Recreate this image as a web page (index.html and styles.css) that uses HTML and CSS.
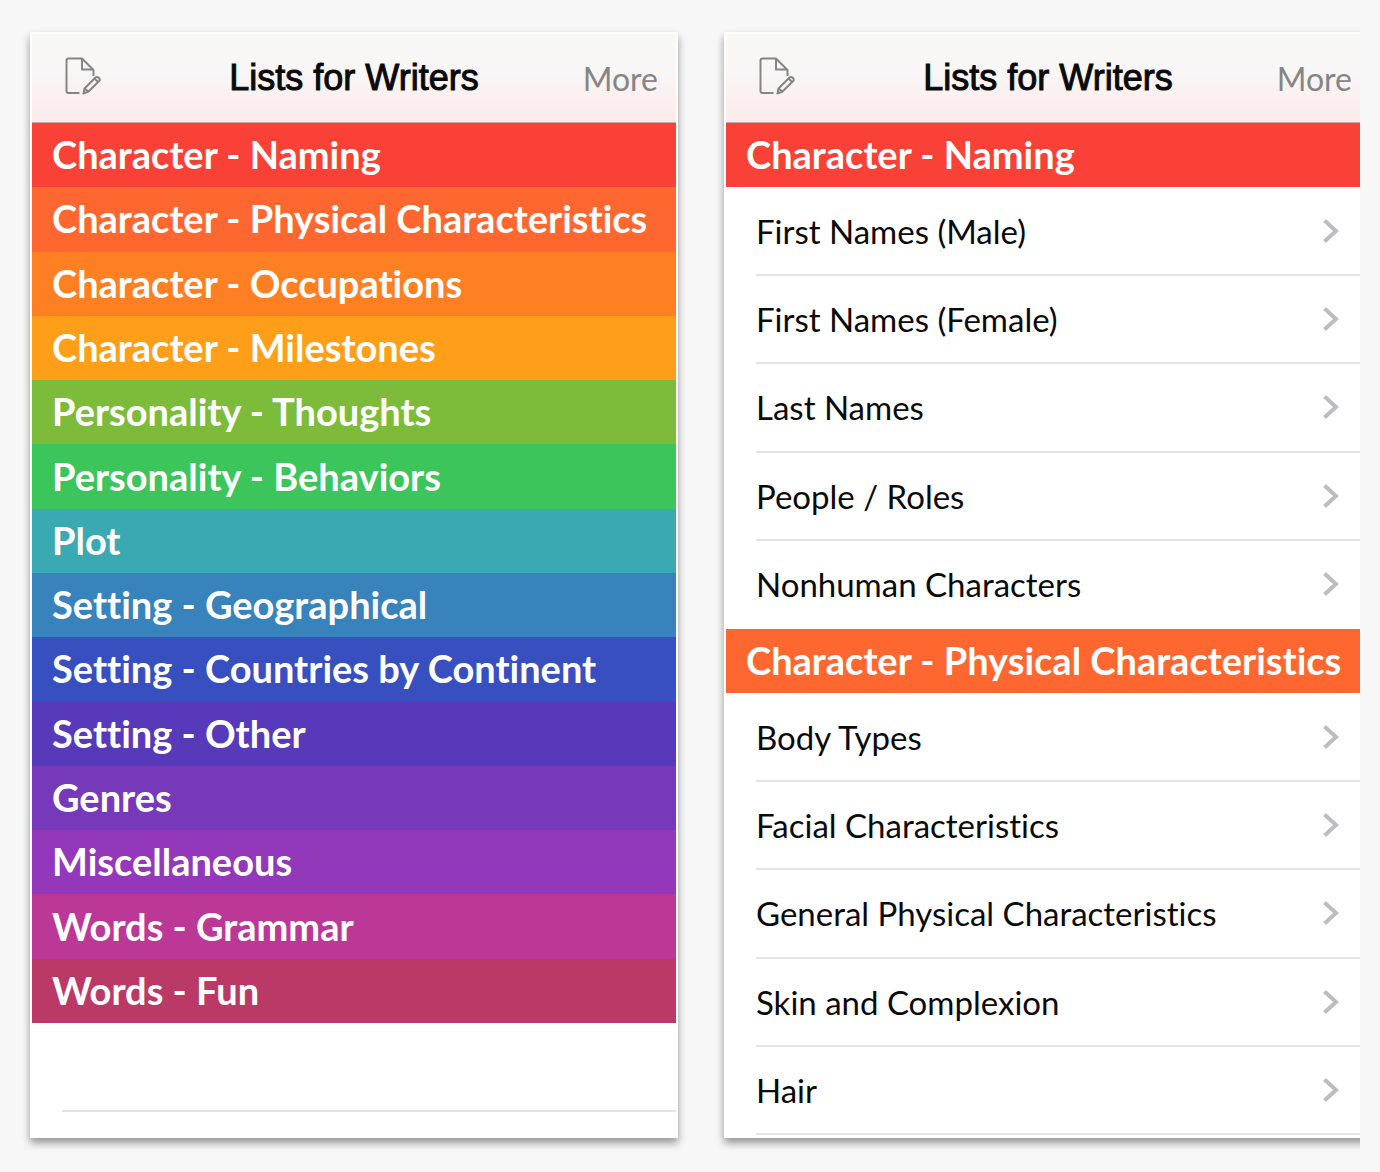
FILE: index.html
```html
<!DOCTYPE html>
<html lang="en">
<head>
<meta charset="utf-8">
<title>Lists for Writers</title>
<link rel="stylesheet" href="styles.css">
</head>
<body>
<svg class="sprite" aria-hidden="true">
  <symbol id="compose" viewBox="0 0 36 38">
    <path d="M14.500 36H3.500Q1.500 36 1.500 34V3.500Q1.500 1.500 3.500 1.500H17L28.500 13V19M17 1.500V12.500H28.500"/>
    <path d="M18.500 36.500L19.500 31.500L30.500 20.500Q32 19.200 33.800 20.800Q35.500 22.600 34.200 24L23.500 34.500ZM29.500 21.500L33.200 25M19.500 31.500L23.500 34.500"/>
  </symbol>
  <symbol id="chevron" viewBox="0 0 18 26"><path d="M2.500 2.500L14 13L2.500 23.500"/></symbol>
</svg>
<main class="strip">
  <section class="card">
    <header class="bar">
      <button class="compose" aria-label="New note"><svg class="icon"><use href="#compose"/></svg></button>
      <h1 class="title">Lists for Writers</h1>
      <button class="more">More</button>
    </header>
    <nav class="bands">
      <a class="band red" href="#">Character - Naming</a>
      <a class="band coral" href="#">Character - Physical Characteristics</a>
      <a class="band orange" href="#">Character - Occupations</a>
      <a class="band amber" href="#">Character - Milestones</a>
      <a class="band lime" href="#">Personality - Thoughts</a>
      <a class="band green" href="#">Personality - Behaviors</a>
      <a class="band teal" href="#">Plot</a>
      <a class="band blue" href="#">Setting - Geographical</a>
      <a class="band royal" href="#">Setting - Countries by Continent</a>
      <a class="band indigo" href="#">Setting - Other</a>
      <a class="band violet" href="#">Genres</a>
      <a class="band purple" href="#">Miscellaneous</a>
      <a class="band magenta" href="#">Words - Grammar</a>
      <a class="band rose" href="#">Words - Fun</a>
    </nav>
    <div class="empty"></div>
  </section>
  <section class="card">
    <header class="bar">
      <button class="compose" aria-label="New note"><svg class="icon"><use href="#compose"/></svg></button>
      <h1 class="title">Lists for Writers</h1>
      <button class="more">More</button>
    </header>
    <h2 class="band red">Character - Naming</h2>
    <nav class="rows">
      <a class="row" href="#">First Names (Male)<svg class="chevron"><use href="#chevron"/></svg></a>
      <a class="row" href="#">First Names (Female)<svg class="chevron"><use href="#chevron"/></svg></a>
      <a class="row" href="#">Last Names<svg class="chevron"><use href="#chevron"/></svg></a>
      <a class="row" href="#">People / Roles<svg class="chevron"><use href="#chevron"/></svg></a>
      <a class="row last" href="#">Nonhuman Characters<svg class="chevron"><use href="#chevron"/></svg></a>
    </nav>
    <h2 class="band coral">Character - Physical Characteristics</h2>
    <nav class="rows">
      <a class="row" href="#">Body Types<svg class="chevron"><use href="#chevron"/></svg></a>
      <a class="row" href="#">Facial Characteristics<svg class="chevron"><use href="#chevron"/></svg></a>
      <a class="row" href="#">General Physical Characteristics<svg class="chevron"><use href="#chevron"/></svg></a>
      <a class="row" href="#">Skin and Complexion<svg class="chevron"><use href="#chevron"/></svg></a>
      <a class="row" href="#">Hair<svg class="chevron"><use href="#chevron"/></svg></a>
    </nav>
  </section>
</main>
</body>
</html>
```
FILE: styles.css
```css
* { box-sizing: border-box; }
body {
  margin: 0;
  background: #f7f7f7;
  font-family: Lato, "Open Sans", sans-serif;
  font-variant-ligatures: none;
}
.sprite { display: none; }
.strip {
  display: flex;
  gap: 46px;
  margin-right: 20px;
  padding: 32px 0 34px 30px;
  overflow: hidden;
}
.card {
  flex: 0 0 calc((100% - 34px) / 2);
  display: flex;
  flex-direction: column;
  padding-bottom: 1px;
  border: 2px solid #fff;
  background: #fff;
  box-shadow: 0 5px 8px rgba(0, 0, 0, .4);
}
.bar {
  display: grid;
  grid-template-columns: 1fr auto 1fr;
  align-items: center;
  height: 89px;
  padding: 0 18px;
  border-bottom: 1px solid #c9a9a6;
  background: linear-gradient(#f8f8f5, #f8f7f7 35%, #fcebea);
}
button {
  padding: 0;
  border: 0;
  background: none;
  font-family: inherit;
}
.compose {
  justify-self: start;
  height: 38px;
  margin: 0 0 4px 15px;
}
.icon {
  display: block;
  width: 36px;
  height: 38px;
  fill: none;
  stroke: #858585;
  stroke-width: 2;
  stroke-linejoin: round;
}
.title {
  margin: 0;
  font: 400 36px/40px "Liberation Sans", sans-serif;
  -webkit-text-stroke: 1px #0a0a0a;
  color: #0a0a0a;
}
.more {
  justify-self: end;
  padding-top: 2px;
  font-size: 32px;
  line-height: 40px;
  color: #858585;
}
.bands {
  display: grid;
  grid-auto-rows: 1fr;
  min-height: 900px;
}
.band {
  display: flex;
  align-items: center;
  min-height: 64px;
  margin: 0;
  padding: 0 20px 2px;
  font-size: 38px;
  font-weight: 700;
  line-height: 44px;
  white-space: nowrap;
  color: #fff;
  text-decoration: none;
}
.red { background: #fa4137; }
.coral { background: #ff6731; }
.orange { background: #ff8022; }
.amber { background: #ff9e18; }
.lime { background: #7dbc3a; }
.green { background: #3bc55b; }
.teal { background: #3ba9b1; }
.blue { background: #3883bb; }
.royal { background: #384fbf; }
.indigo { background: #563aba; }
.violet { background: #7639ba; }
.purple { background: #9338bb; }
.magenta { background: #bb3897; }
.rose { background: #bb3966; }
.empty {
  height: 89px;
  margin-left: 30px;
  border-bottom: 2px solid #e4e4e4;
}
.rows {
  display: grid;
  grid-auto-rows: 1fr;
  min-height: 442px;
  padding: 1px 0 0 30px;
}
.row {
  display: flex;
  align-items: center;
  justify-content: space-between;
  padding-right: 30px;
  border-bottom: 2px solid #e4e4e4;
  font-size: 33px;
  line-height: 40px;
  color: #0a0a0a;
  text-decoration: none;
}
.last { border-bottom-color: transparent; }
.chevron {
  width: 18px;
  height: 26px;
  fill: none;
  stroke: #bdbdc1;
  stroke-width: 4;
}
```
